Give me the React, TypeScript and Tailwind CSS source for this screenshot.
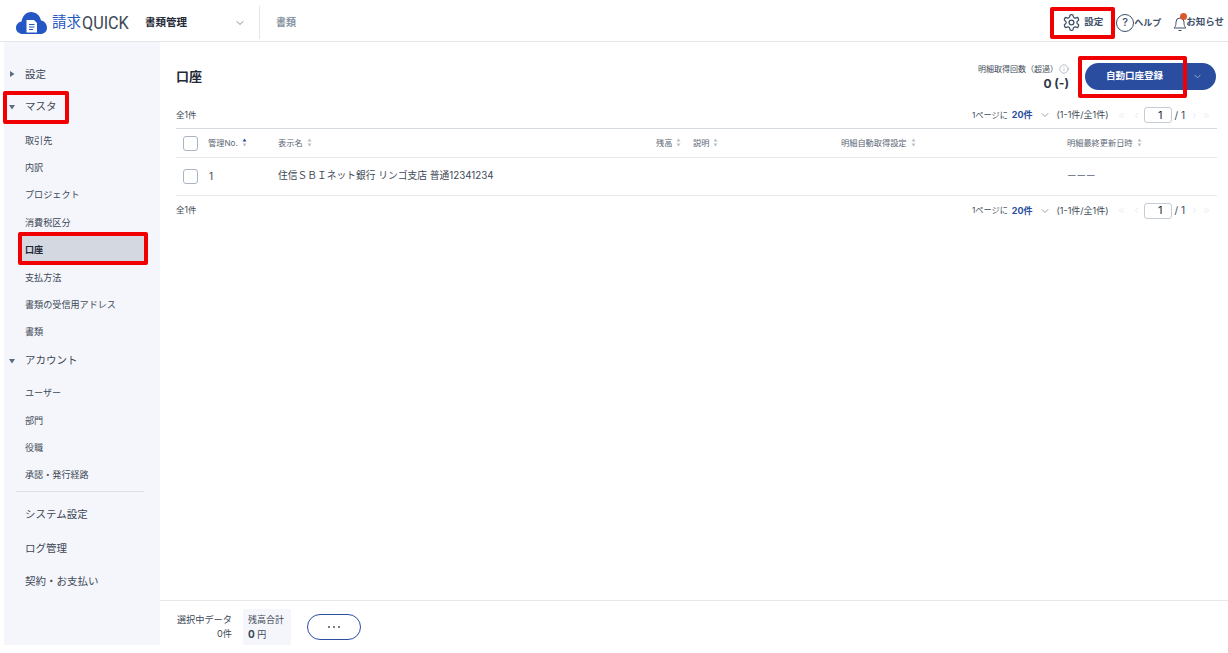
import { ChevronDown, ChevronLeft, ChevronRight, ChevronsLeft, ChevronsRight, Info } from 'lucide-react';

const FONT = "font-['Inter','Noto_Sans_CJK_JP',sans-serif]";

const MASTER = ['取引先', '内訳', 'プロジェクト', '消費税区分', '口座', '支払方法', '書類の受信用アドレス', '書類'];
const ACCOUNT = ['ユーザー', '部門', '役職', '承認・発行経路'];
const BOTTOM = ['システム設定', 'ログ管理', '契約・お支払い'];

function Caret({ open }: { open?: boolean }) {
  return (
    <svg width="6" height="6" viewBox="0 0 6 6" className={`absolute left-[5px] ${open ? 'top-[6px]' : 'top-[5px]'}`}>
      <path d={open ? 'M0 1h6L3 5.5z' : 'M1 0v6l4.5-3z'} fill="#5b6b80" />
    </svg>
  );
}

function SortIcon({ active }: { active?: boolean }) {
  return (
    <svg width="5" height="9" viewBox="0 0 5 9" className="ml-[4px] shrink-0">
      <path d="M2.5 0.5L4.5 3.5H0.5z" fill={active ? '#2b4da0' : '#b6bfcb'} />
      <path d="M2.5 8.5L0.5 5.5H4.5z" fill="#b6bfcb" />
    </svg>
  );
}

function Pager() {
  return (
    <div className="flex items-center text-[8.2px] text-[#3d4856]">
      <span>1ページに</span>
      <span className="ml-[4px] text-[9px] font-bold text-[#2b4da0]">20件</span>
      <ChevronDown size={12} strokeWidth={1.1} className="ml-[6px] text-[#4b5563]" />
      <span className="ml-[6px] text-[9px]">(1-1件/全1件)</span>
      <ChevronsLeft size={9} strokeWidth={1.2} className="ml-[8px] text-[#c5ccd6]" />
      <ChevronLeft size={9} strokeWidth={1.2} className="ml-[6px] text-[#c5ccd6]" />
      <div className="ml-[3px] flex h-[16px] w-[28px] items-center justify-end rounded-[3px] border border-[#c5ccd6] pr-[8px] text-[11px] text-[#1f2937]">1</div>
      <span className="ml-[3px] text-[10px]">/ 1</span>
      <ChevronRight size={9} strokeWidth={1.2} className="ml-[5px] text-[#c5ccd6]" />
      <ChevronsRight size={9} strokeWidth={1.2} className="ml-[3px] mr-[6px] text-[#c5ccd6]" />
    </div>
  );
}

function Checkbox() {
  return <div className="ml-[7px] size-[15px] rounded-[3px] border border-[#aab4c2] bg-white" />;
}

function ColHead({ label, active }: { label: string; active?: boolean }) {
  return (
    <div className="flex items-center whitespace-nowrap text-[8.2px] text-[#5b6675]">
      {label}
      <SortIcon active={active} />
    </div>
  );
}

const ROW = 'grid grid-cols-[32px_70px_378px_37px_148px_226px_1fr] items-center';

export default function App() {
  return (
    <div className={`relative flex h-[653px] w-[1228px] flex-col overflow-hidden bg-white ${FONT}`}>
      <header className="flex h-[42px] shrink-0 items-center border-b border-[#e2e5ea] pt-[4px]">
        <svg width="31" height="22" viewBox="0 0 31 22" className="ml-[16px] shrink-0">
          <path d="M7 22C3 22 0 19.5 0 16c0-3.5 2.5-6 5.5-6.5C6.5 4 10 0 15 0c5 0 9 3.5 10 8.5 3.5.5 6 3.5 6 7.5 0 3.5-3 6-6.5 6z" fill="#2456c4" />
          <path d="M10.5 8h7.5l3 3v9.5h-10.5z" fill="#fff" />
          <path d="M13 12.5h5.5M13 15h5.5M13 17.5h4" stroke="#2456c4" strokeWidth="1.2" />
        </svg>
        <span className="ml-[5px] text-[14.5px] leading-none text-[#2456c4]">請求</span>
        <span className="ml-[1px] w-[47px] origin-left scale-x-[0.9] text-[18px] font-normal leading-none text-[#3d4856] [font-family:'Roboto']">QUICK</span>
        <span className="ml-[16px] w-[89px] text-[10.5px] font-bold text-[#1f2937]">書類管理</span>
        <ChevronDown size={12} strokeWidth={1.4} className="text-[#4b5563]" />
        <div className="ml-[13px] h-[33px] w-px bg-[#e2e5ea]" />
        <span className="ml-[16px] text-[10px] font-bold text-[#8794a3]">書類</span>
        <div className="ml-auto flex items-center pr-[4px]">
          <svg width="19" height="19" viewBox="0 0 24 24" fill="none" stroke="#3d5068" strokeWidth="1.6" strokeLinecap="round" strokeLinejoin="round">
            <path d="M12.22 2h-.44a2 2 0 0 0-2 2v.18a2 2 0 0 1-1 1.73l-.43.25a2 2 0 0 1-2 0l-.15-.08a2 2 0 0 0-2.73.73l-.22.38a2 2 0 0 0 .73 2.73l.15.1a2 2 0 0 1 1 1.72v.51a2 2 0 0 1-1 1.74l-.15.09a2 2 0 0 0-.73 2.73l.22.38a2 2 0 0 0 2.73.73l.15-.08a2 2 0 0 1 2 0l.43.25a2 2 0 0 1 1 1.73V20a2 2 0 0 0 2 2h.44a2 2 0 0 0 2-2v-.18a2 2 0 0 1 1-1.73l.43-.25a2 2 0 0 1 2 0l.15.08a2 2 0 0 0 2.73-.73l.22-.39a2 2 0 0 0-.73-2.73l-.15-.08a2 2 0 0 1-1-1.74v-.5a2 2 0 0 1 1-1.74l.15-.09a2 2 0 0 0 .73-2.73l-.22-.38a2 2 0 0 0-2.73-.73l-.15.08a2 2 0 0 1-2 0l-.43-.25a2 2 0 0 1-1-1.73V4a2 2 0 0 0-2-2z" />
            <circle cx="12" cy="12" r="3" />
          </svg>
          <span className="ml-[3px] text-[9.5px] font-bold text-[#3d5068]">設定</span>
          <div className="ml-[13px] flex size-[18px] items-center justify-center rounded-full border border-[#3d5068] text-[11px] font-medium leading-none text-[#3d5068]">?</div>
          <span className="text-[9px] font-bold text-[#3d5068]">ヘルプ</span>
          <div className="relative ml-[12px] flex w-[13px]">
            <svg width="14" height="18" viewBox="0 0 14 18" fill="none" stroke="#3d5068" strokeWidth="1" className="shrink-0">
              <path d="M1 14c1-1 2-2 2-6a4 4 0 0 1 8 0c0 4 1 5 2 6z" />
              <path d="M5.5 16.5h3" />
            </svg>
            <div className="absolute left-[7px] top-[-1px] size-[7px] rounded-full bg-[#d8582f]" />
          </div>
          <span className="text-[9.5px] font-bold text-[#3d5068]">お知らせ</span>
        </div>
      </header>

      <div className="flex min-h-0 flex-1">
        <aside className="mb-[8px] ml-[4px] flex w-[156px] shrink-0 flex-col bg-[#f5f6fb] pt-[24px]">
          <div className="relative h-[20px] pl-[21px] text-[10.5px] leading-[18px] text-[#3d4856]">
            <Caret />
            設定
          </div>
          <div className="relative mt-[12px] h-[20px] pl-[21px] text-[10.5px] leading-[18px] text-[#3d4856]">
            <Caret open />
            マスタ
          </div>
          <div className="mt-[8.6px] flex flex-col">
            {MASTER.map((m) => (
              <div
                key={m}
                className={`h-[27.4px] text-[9.1px] leading-[27px] ${m === '口座' ? 'mx-[16px] bg-[#d4d8e0] pl-[5px] font-bold text-[#1f2937]' : 'pl-[21px] text-[#3d4856]'}`}
              >
                {m}
              </div>
            ))}
          </div>
          <div className="relative mt-[6.4px] h-[20px] pl-[21px] text-[10.5px] leading-[18px] text-[#3d4856]">
            <Caret open />
            アカウント
          </div>
          <div className="mt-[7px] flex flex-col">
            {ACCOUNT.map((m) => (
              <div key={m} className="h-[27.4px] pl-[21px] text-[9.1px] leading-[27px] text-[#3d4856]">
                {m}
              </div>
            ))}
          </div>
          <div className="ml-[12px] mr-[16px] mt-[2px] h-px bg-[#dcdfe6]" />
          <div className="mt-[6.5px] flex flex-col">
            {BOTTOM.map((m) => (
              <div key={m} className="h-[33.5px] pl-[21px] text-[10.5px] leading-[33px] text-[#3d4856]">
                {m}
              </div>
            ))}
          </div>
        </aside>

        <main className="flex min-w-0 flex-1 flex-col">
          <div className="flex-1 pl-[16px] pr-[11px]">
            <div className="flex h-[57px] items-start justify-between pr-[1px]">
              <h1 className="mt-[23px] text-[13px] font-bold leading-[22px] text-[#1f2937]">口座</h1>
              <div className="mt-[21px] flex items-start">
                <div className="mr-[16px] flex flex-col items-end">
                  <div className="flex items-center text-[8px] leading-[12px] text-[#3d4856]">
                    明細取得回数（超過）
                    <Info size={10} strokeWidth={1} className="ml-[1px] text-[#5b6675]" />
                  </div>
                  <div className="mt-[2px] text-[12px] font-bold leading-[14px] text-[#2d3744]">0 (-)</div>
                </div>
                <div className="flex h-[27px] w-[131px] items-center rounded-full bg-[#2b4da0] text-white">
                  <span className="w-[100px] pl-[21px] text-[9.5px] font-bold">自動口座登録</span>
                  <ChevronDown size={11} strokeWidth={1.2} className="ml-[7px] text-[#dfe6f6]" />
                </div>
              </div>
            </div>

            <div className="flex h-[30px] items-center justify-between border-b border-[#d5d9e0] pt-[3px]">
              <span className="text-[8.5px] text-[#3d4856]">全1件</span>
              <Pager />
            </div>

            <div className={`${ROW} h-[29px] border-b border-[#e6e8ec]`}>
              <Checkbox />
              <ColHead label="管理No." active />
              <ColHead label="表示名" />
              <ColHead label="残高" />
              <ColHead label="説明" />
              <ColHead label="明細自動取得設定" />
              <ColHead label="明細最終更新日時" />
            </div>
            <div className={`${ROW} h-[38px] border-b border-[#e6e8ec]`}>
              <Checkbox />
              <span className="pl-[1px] text-[10px] text-[#3d4856]">1</span>
              <span className="whitespace-nowrap text-[9.75px] text-[#3d4856]">住信ＳＢＩネット銀行 リンゴ支店 普通12341234</span>
              <span />
              <span />
              <span />
              <span className="text-[9.5px] text-[#5b6675]">ーーー</span>
            </div>
            <div className="flex h-[29px] items-center justify-between">
              <span className="text-[8.5px] text-[#3d4856]">全1件</span>
              <Pager />
            </div>
          </div>

          <footer className="flex h-[53px] shrink-0 items-center border-t border-[#e6e8ec] pl-[16px]">
            <div className="flex w-[56px] flex-col items-end text-[9.2px] leading-[14px] text-[#3d4856]">
              <span className="whitespace-nowrap">選択中データ</span>
              <span>0件</span>
            </div>
            <div className="ml-[11px] flex h-[36px] w-[48px] flex-col justify-center rounded-[2px] bg-[#f5f6fb] pl-[5px] text-[9px] leading-[14px] text-[#3d4856]">
              <span>残高合計</span>
              <span><b className="text-[10px]">0</b> 円</span>
            </div>
            <div className="ml-[16px] flex h-[26px] w-[54px] items-center justify-center gap-[2.5px] rounded-full border-[1.5px] border-[#2b4da0]">
              <i className="size-[2.5px] rounded-full bg-[#4b5563]" />
              <i className="size-[2.5px] rounded-full bg-[#4b5563]" />
              <i className="size-[2.5px] rounded-full bg-[#4b5563]" />
            </div>
          </footer>
        </main>
      </div>

      <div className="absolute left-[1050px] top-[7px] h-[32px] w-[65px] rounded-[2px] border-[4px] border-[#f00000]" />
      <div className="absolute left-[1078px] top-[56px] h-[42px] w-[109px] rounded-[2px] border-[4px] border-[#f00000]" />
      <div className="absolute left-[3px] top-[91px] h-[33px] w-[66px] rounded-[2px] border-[4px] border-[#f00000]" />
      <div className="absolute left-[18px] top-[232px] h-[33px] w-[130px] rounded-[2px] border-[4px] border-[#f00000]" />
    </div>
  );
}
